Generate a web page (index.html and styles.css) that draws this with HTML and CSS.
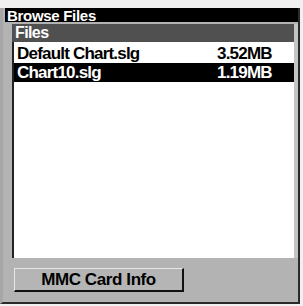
FILE: index.html
```html
<!DOCTYPE html>
<html>
<head>
<meta charset="utf-8">
<link rel="stylesheet" href="styles.css">
</head>
<body>
<div class="screen">
  <div class="window">
    <div class="title">Browse Files</div>
    <div class="pane">
      <div class="pane-head">Files</div>
      <div class="list">
        <div class="row"><span class="name">Default Chart.slg</span><span class="size">3.52MB</span></div>
        <div class="row selected"><span class="name">Chart10.slg</span><span class="size">1.19MB</span></div>
      </div>
    </div>
    <div class="buttons">
      <div class="button">MMC Card Info</div>
    </div>
  </div>
</div>
</body>
</html>
```
FILE: styles.css
```css
html, body {
  margin: 0;
  padding: 0;
  background: #f0f0f0;
}
.screen {
  width: 303px;
  height: 306px;
  padding-top: 8px;
  box-sizing: border-box;
  font-family: "Liberation Sans", Arial, sans-serif;
  font-weight: bold;
}
.window {
  width: 300px;
  height: 296px;
  box-sizing: border-box;
  background: #b3b3b3;
  border-left: 3px solid #a6a6a6;
  border-right: 2px solid #2a2a2a;
  border-bottom: 2px solid #2a2a2a;
  padding: 0 0 0 2px;
  display: flex;
  flex-direction: column;
}
.title {
  background: #000;
  color: #fff;
  height: 14px;
  line-height: 15px;
  font-size: 15px;
  letter-spacing: -0.3px;
  padding-left: 2px;
}
.pane {
  margin: 2px 0 0 7px;
  display: flex;
  flex-direction: column;
  height: 234px;
}
.pane-head {
  background: #505050;
  color: #fff;
  height: 18px;
  line-height: 18px;
  font-size: 16px;
  letter-spacing: -0.6px;
  padding-left: 3px;
  border-right: 4px solid #c4c4c4;
}
.list {
  flex: 1;
  background: #fff;
  border-left: 2px solid #222;
  border-right: 4px solid #c4c4c4;
  padding-top: 2px;
}
.row {
  display: flex;
  height: 19px;
  line-height: 19px;
  font-size: 17px;
  letter-spacing: -0.8px;
  color: #000;
  padding-left: 3px;
}
.row.selected {
  background: #000;
  color: #fff;
}
.name {
  flex: 1;
}
.size {
  width: 77px;
  text-align: left;
}
.buttons {
  padding: 10px 0 0 9px;
}
.button {
  width: 170px;
  height: 24px;
  box-sizing: border-box;
  background: #b5b5b5;
  border-top: 1px solid #e6e6e6;
  border-left: 1px solid #e6e6e6;
  border-right: 2px solid #111;
  border-bottom: 2px solid #111;
  text-align: center;
  font-size: 17px;
  letter-spacing: -0.4px;
  line-height: 21px;
  color: #000;
}
```
